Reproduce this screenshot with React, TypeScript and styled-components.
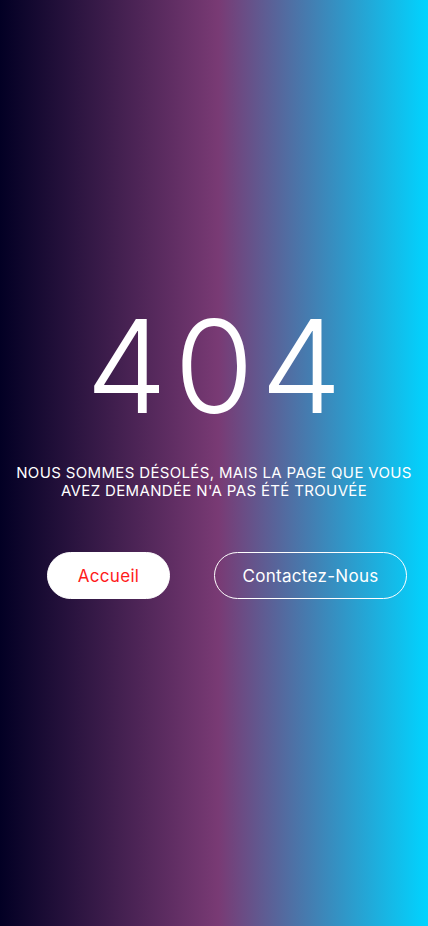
import React from "react";
import styled, { createGlobalStyle } from "styled-components";

const Global = createGlobalStyle`
  html, body { margin: 0; padding: 0; }
  body { font-family: Inter, "Noto Sans", sans-serif; }
  * { box-sizing: border-box; }
`;

const Page = styled.main`
  min-height: 926px;
  width: 100%;
  background: linear-gradient(90deg, #020024 0%, #793a74 51%, #00d4ff 100%);
  display: flex;
  flex-direction: column;
  align-items: center;
  padding-top: 300px;
  color: #fff;
`;

const Code = styled.h1`
  margin: 0;
  font-family: Inter, sans-serif;
  font-weight: 300;
  font-size: 129px;
  line-height: 132px;
  letter-spacing: 7px;
  text-indent: 7px;
`;

const Message = styled.p`
  margin: 32px 0 0;
  padding: 0 8px;
  text-align: center;
  text-transform: uppercase;
  font-size: 15px;
  line-height: 18px;
  font-weight: 400;
  letter-spacing: 0.35px;
`;

const Actions = styled.div`
  display: flex;
  gap: 44px;
  margin-top: 52px;
  padding-left: 26px;
`;

const Button = styled.a<{ $primary?: boolean }>`
  display: flex;
  align-items: center;
  justify-content: center;
  height: 47px;
  width: ${(p) => (p.$primary ? "123px" : "193px")};
  border-radius: 24px;
  font-size: 17px;
  font-weight: 400;
  letter-spacing: 0.3px;
  text-decoration: none;
  background: ${(p) => (p.$primary ? "#fff" : "transparent")};
  color: ${(p) => (p.$primary ? "#ff1a1a" : "#fff")};
  border: 1px solid #fff;
`;

export default function App() {
  return (
    <>
      <Global />
      <Page>
        <Code>404</Code>
        <Message>
          Nous sommes désolés, mais la page que vous
          <br />
          avez demandée n'a pas été trouvée
        </Message>
        <Actions>
          <Button $primary href="#">Accueil</Button>
          <Button href="#">Contactez-Nous</Button>
        </Actions>
      </Page>
    </>
  );
}
